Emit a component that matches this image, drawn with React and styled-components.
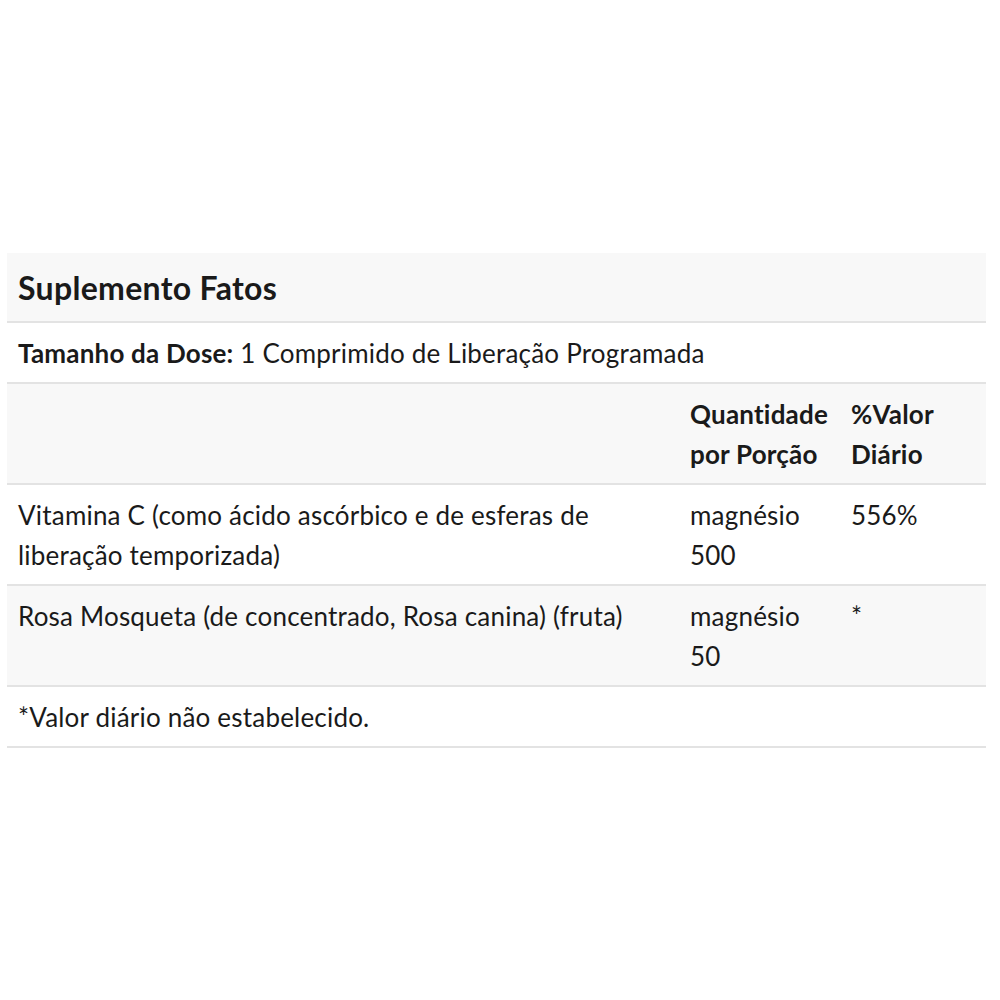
import React from "react";
import styled, { createGlobalStyle } from "styled-components";

const rows = [
  {
    name: "Vitamina C (como ácido ascórbico e de esferas de liberação temporizada)",
    amount: ["magnésio", "500"],
    dv: "556%",
  },
  {
    name: "Rosa Mosqueta (de concentrado, Rosa canina) (fruta)",
    amount: ["magnésio", "50"],
    dv: "*",
  },
];

const App = () => {
  return (
    <Page>
      <GlobalStyle />
      <Table>
        <colgroup>
          <Col $w={672} />
          <Col $w={161} />
          <Col $w={146} />
        </colgroup>
        <tbody>
          <Row $shade>
            <TitleCell colSpan={3}>Suplemento Fatos</TitleCell>
          </Row>
          <Row>
            <Cell colSpan={3}>
              <strong>Tamanho da Dose:</strong> 1 Comprimido de Liberação Programada
            </Cell>
          </Row>
          <Row $shade>
            <Cell />
            <HeadCell>
              Quantidade
              <br />
              por Porção
            </HeadCell>
            <HeadCell>
              %Valor
              <br />
              Diário
            </HeadCell>
          </Row>
          {rows.map((r, i) => (
            <Row key={r.name} $shade={i % 2 === 1}>
              <Cell>{r.name}</Cell>
              <Cell>
                {r.amount[0]}
                <br />
                {r.amount[1]}
              </Cell>
              <Cell>{r.dv}</Cell>
            </Row>
          ))}
          <Row>
            <Cell colSpan={3}>*Valor diário não estabelecido.</Cell>
          </Row>
        </tbody>
      </Table>
    </Page>
  );
};

const GlobalStyle = createGlobalStyle`
  body {
    margin: 0;
    background: #fff;
    font-family: Lato, "Open Sans", sans-serif;
    color: #1a1a1a;
  }
`;

const Page = styled.div`
  padding: 253px 14px 0 7px;
`;

const Table = styled.table`
  width: 979px;
  border-collapse: collapse;
  table-layout: fixed;
  font-size: 26px;
  letter-spacing: 0.2px;
  line-height: 40px;
`;

const Col = styled.col`
  width: ${(p) => p.$w}px;
`;

const Row = styled.tr`
  background: ${(p) => (p.$shade ? "#f8f8f8" : "#fff")};
  border-bottom: 2px solid #e3e3e3;
`;

const Cell = styled.td`
  padding: 10px 8px 9px 11px;
  vertical-align: top;
  text-align: left;

  strong {
    font-weight: 700;
  }
`;

const HeadCell = styled(Cell)`
  font-weight: 700;
  white-space: nowrap;
`;

const TitleCell = styled(Cell)`
  font-size: 32px;
  letter-spacing: 0.3px;
  font-weight: 700;
  line-height: 46px;
  padding-top: 12px;
  padding-bottom: 10px;
`;

export default App;
